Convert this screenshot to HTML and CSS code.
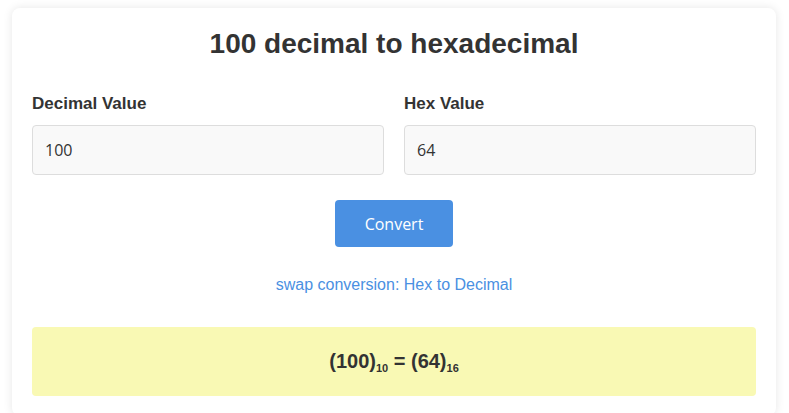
FILE: index.html
```html
<!DOCTYPE html>
<html>
<head>
<meta charset="utf-8">
<link rel="stylesheet" href="styles.css">
</head>
<body>
<div class="card">
  <h1 class="title">100 decimal to hexadecimal</h1>
  <div class="fields">
    <div class="field">
      <label class="label">Decimal Value</label>
      <input class="input" type="text" value="100">
    </div>
    <div class="field">
      <label class="label">Hex Value</label>
      <input class="input" type="text" value="64">
    </div>
  </div>
  <div class="actions">
    <button class="btn">Convert</button>
  </div>
  <div class="swap"><a class="swap-link" href="#">swap conversion: Hex to Decimal</a></div>
  <div class="result"><span class="formula">(100)<sub class="base">10</sub> = (64)<sub class="base">16</sub></span></div>
</div>
</body>
</html>
```
FILE: styles.css
```css
html, body {
  margin: 0;
  padding: 0;
  background: #ffffff;
}
body {
  font-family: "Liberation Sans", Arial, sans-serif;
  color: #333333;
}
.card {
  width: 764px;
  box-sizing: border-box;
  margin: 8px 0 0 12px;
  padding: 20px;
  background: #ffffff;
  border-radius: 8px;
  box-shadow: 0 0 10px rgba(0, 0, 0, 0.1);
}
.title {
  margin: 0 0 34px;
  font-size: 28px;
  font-weight: bold;
  text-align: center;
  line-height: 32px;
  color: #333333;
}
.fields {
  display: flex;
  gap: 20px;
}
.field {
  flex: 1;
  display: flex;
  flex-direction: column;
}
.label {
  font-size: 17px;
  font-weight: bold;
  line-height: 20px;
  margin-bottom: 11px;
  color: #333333;
}
.input {
  height: 50px;
  box-sizing: border-box;
  padding: 0 12px;
  font-family: "Open Sans", sans-serif;
  font-size: 16px;
  color: #333333;
  background: #f9f9f9;
  border: 1px solid #dddddd;
  border-radius: 4px;
  outline: none;
}
.actions {
  display: flex;
  justify-content: center;
  margin-top: 25px;
}
.btn {
  width: 118px;
  height: 47px;
  font-family: "Open Sans", sans-serif;
  font-size: 16px;
  color: #ffffff;
  background: #4a90e2;
  border: none;
  border-radius: 4px;
  padding: 0;
}
.swap {
  text-align: center;
  margin-top: 29px;
  line-height: 18px;
  font-size: 16px;
}
.swap-link {
  color: #4a90e2;
  text-decoration: none;
}
.result {
  margin-top: 33px;
  background: #f9f9b4;
  border-radius: 4px;
  height: 69px;
  display: flex;
  align-items: center;
  justify-content: center;
  font-size: 20px;
  font-weight: bold;
  color: #333333;
}
.base {
  font-size: 11px;
  position: relative;
  top: 4px;
  vertical-align: baseline;
}
```
